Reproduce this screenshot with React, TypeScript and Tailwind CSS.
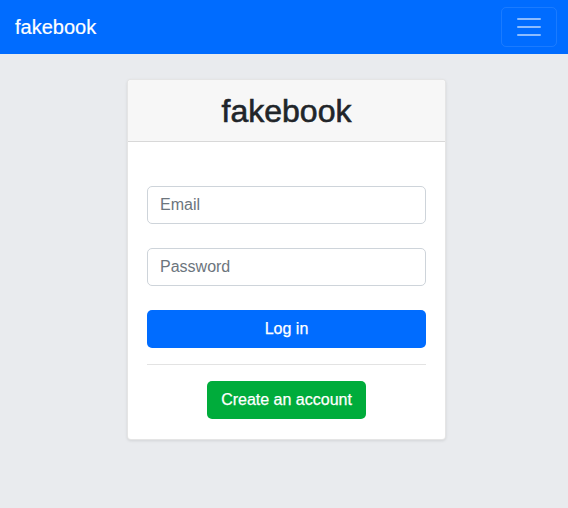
export default function App() {
  return (
    <div
      className="min-h-[508px] bg-[#e9ebee] text-[#212529]"
      style={{ fontFamily: '"Liberation Sans", Arial, sans-serif' }}
    >
      <nav className="flex h-[54px] items-center justify-between bg-[#006cff] pl-[15px] pr-[11px]">
        <span className="text-[20px] leading-[30px] text-white [-webkit-text-stroke:0.2px_white]">fakebook</span>
        <button className="flex h-[40px] w-[56px] items-center justify-center rounded-[5px] border border-white/10">
          <svg width="30" height="30" viewBox="0 0 30 30">
            <path
              d="M4 7h22M4 15h22M4 23h22"
              stroke="rgba(255,255,255,0.55)"
              strokeWidth="2"
              strokeLinecap="round"
            />
          </svg>
        </button>
      </nav>
      <div className="flex justify-center pt-[25px] pl-[5px]">
        <div className="w-[319px] rounded-[4px] border border-black/10 bg-white shadow-[0_1px_3px_rgba(0,0,0,0.1)]">
          <div className="flex h-[62px] items-center justify-center rounded-t-[4px] border-b border-black/[0.125] bg-[#f7f7f7]">
            <h2 className="text-[32px] font-medium leading-[38px] [-webkit-text-stroke:0.6px_#212529]">fakebook</h2>
          </div>
          <div className="px-[19px] pt-[44px] pb-[20px]">
            <div className="flex flex-col gap-[24px]">
              <input
                placeholder="Email"
                className="h-[38px] w-full rounded-[5px] border border-[#ced4da] px-[12px] text-[16px] placeholder:text-[#6c757d] outline-none"
              />
              <input
                placeholder="Password"
                type="password"
                className="h-[38px] w-full rounded-[5px] border border-[#ced4da] px-[12px] text-[16px] placeholder:text-[#6c757d] outline-none"
              />
              <button className="h-[38px] w-full rounded-[5px] bg-[#006cff] text-[16px] text-white [-webkit-text-stroke:0.25px_white]">
                Log in
              </button>
            </div>
            <div className="my-[16px] h-px bg-[#e3e3e3]" />
            <div className="flex justify-center">
              <button className="h-[38px] rounded-[5px] bg-[#00ac3b] px-[14px] text-[16px] text-white [-webkit-text-stroke:0.25px_white]">
                Create an account
              </button>
            </div>
          </div>
        </div>
      </div>
    </div>
  );
}
